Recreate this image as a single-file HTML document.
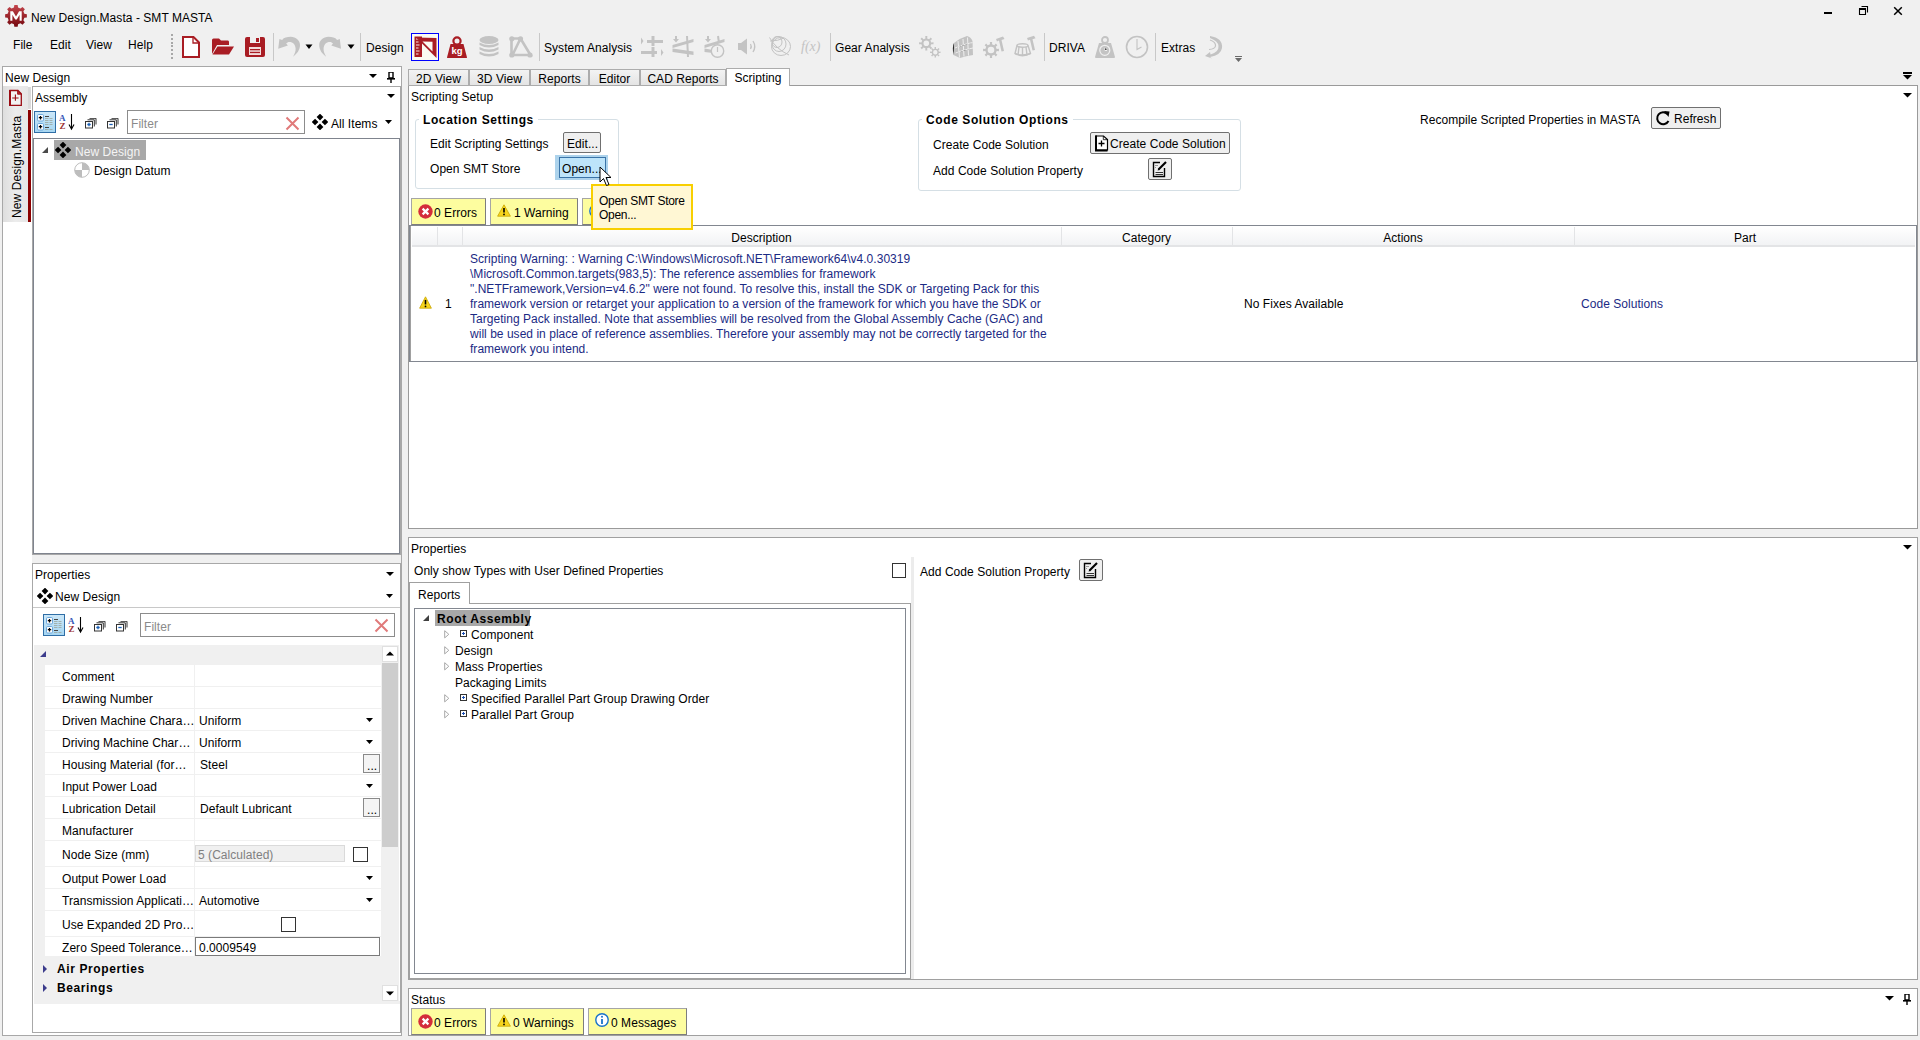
<!DOCTYPE html><html><head><meta charset="utf-8"><style>
html,body{margin:0;padding:0;width:1920px;height:1040px;overflow:hidden;background:#f0f0f0;}
body{position:relative;font-family:"Liberation Sans",sans-serif;font-size:12px;}
div,span,svg{position:absolute;}
.t{white-space:pre;line-height:14px;letter-spacing:0.05px;}
</style></head><body>
<svg style="left:4px;top:4px;" width="24" height="24" viewBox="0 0 24 24"><defs><linearGradient id="gg" x1="0" y1="0" x2="0" y2="1"><stop offset="0" stop-color="#c4454c"/><stop offset="1" stop-color="#75080e"/></linearGradient></defs><path d="M9.93 3.45 L10.35 0.93 L13.65 0.93 L14.07 3.45 L16.44 4.43 L18.52 2.94 L20.86 5.28 L19.37 7.36 L20.35 9.73 L22.87 10.15 L22.87 13.45 L20.35 13.87 L19.37 16.24 L20.86 18.32 L18.52 20.66 L16.44 19.17 L14.07 20.15 L13.65 22.67 L10.35 22.67 L9.93 20.15 L7.56 19.17 L5.48 20.66 L3.14 18.32 L4.63 16.24 L3.65 13.87 L1.13 13.45 L1.13 10.15 L3.65 9.73 L4.63 7.36 L3.14 5.28 L5.48 2.94 L7.56 4.43 Z" fill="url(#gg)"/><path d="M6.3 16.8 V7.2 H8.9 L12 12.6 L15.1 7.2 H17.7 V16.8 H15.6 V10.8 L12.8 15.6 H11.2 L8.4 10.8 V16.8 Z" fill="#fff"/></svg>
<span class="t" style="left:31px;top:11px;font-size:12px;color:#000;">New Design.Masta - SMT MASTA</span>
<div style="left:1824px;top:12px;width:8px;height:2px;background:#000;"></div>
<svg style="left:1857px;top:4px;" width="14" height="14" viewBox="0 0 14 14"><path d="M2.5 5 H8.5 V10.5 H2.5 Z" fill="none" stroke="#000" stroke-width="1.1"/><rect x="2" y="4" width="7" height="2" fill="#000"/><path d="M4.5 2.5 H10.5 V8.5" fill="none" stroke="#000" stroke-width="1.1"/></svg>
<svg style="left:1891px;top:4px;" width="14" height="14" viewBox="0 0 14 14"><path d="M3.2 3.2 L10.8 10.8 M10.8 3.2 L3.2 10.8" stroke="#000" stroke-width="1.5"/></svg>
<span class="t" style="left:13px;top:38px;font-size:12px;color:#000;">File</span>
<span class="t" style="left:50px;top:38px;font-size:12px;color:#000;">Edit</span>
<span class="t" style="left:86px;top:38px;font-size:12px;color:#000;">View</span>
<span class="t" style="left:128px;top:38px;font-size:12px;color:#000;">Help</span>
<span class="t" style="left:366px;top:41px;font-size:12px;color:#000;">Design</span>
<span class="t" style="left:544px;top:41px;font-size:12px;color:#000;">System Analysis</span>
<span class="t" style="left:835px;top:41px;font-size:12px;color:#000;">Gear Analysis</span>
<span class="t" style="left:1049px;top:41px;font-size:12px;color:#000;">DRIVA</span>
<span class="t" style="left:1161px;top:41px;font-size:12px;color:#000;">Extras</span>
<div style="left:2px;top:66px;width:400px;height:970px;background:#fff;border:1px solid #a8a8a8;box-sizing:border-box;"></div>
<span class="t" style="left:5px;top:71px;font-size:12px;color:#000;">New Design</span>
<div style="left:32px;top:86px;width:369px;height:1px;background:#b8b8b8;"></div>
<div style="left:3px;top:86px;width:25px;height:136px;background:linear-gradient(to right,#dedede,#ececec 50%,#e6e6e6);"></div>
<div style="left:28px;top:87px;width:3px;height:22px;background:#dadada;"></div>
<div style="left:28px;top:110px;width:3px;height:112px;background:#8b0000;"></div>
<div style="left:32px;top:86px;width:369px;height:469px;background:#fff;border:1px solid #a8a8a8;box-sizing:border-box;"></div>
<span class="t" style="left:35px;top:91px;font-size:12px;color:#000;">Assembly</span>
<div style="left:33px;top:138px;width:367px;height:416px;background:#fff;border:1px solid #7f848e;box-sizing:border-box;"></div>
<div style="left:32px;top:555px;width:369px;height:8px;background:#f0f0f0;"></div>
<div style="left:32px;top:563px;width:369px;height:470px;background:#fff;border:1px solid #a8a8a8;box-sizing:border-box;"></div>
<span class="t" style="left:35px;top:568px;font-size:12px;color:#000;">Properties</span>
<span class="t" style="left:55px;top:590px;font-size:12px;color:#000;">New Design</span>
<div style="left:33px;top:607px;width:367px;height:1px;background:#c8c8c8;"></div>
<div style="left:408px;top:85px;width:1510px;height:444px;background:#fff;border:1px solid #9a9a9a;box-sizing:border-box;"></div>
<div style="left:408px;top:537px;width:1510px;height:443px;background:#fff;border:1px solid #a0a0a0;box-sizing:border-box;"></div>
<div style="left:408px;top:988px;width:1510px;height:48px;background:#fff;border:1px solid #a0a0a0;box-sizing:border-box;"></div>
<div style="left:171px;top:34.0px;width:2px;height:2.0px;background:#a8a8a8;"></div>
<div style="left:171px;top:37.8px;width:2px;height:2.0px;background:#a8a8a8;"></div>
<div style="left:171px;top:41.6px;width:2px;height:2.0px;background:#a8a8a8;"></div>
<div style="left:171px;top:45.4px;width:2px;height:2.0px;background:#a8a8a8;"></div>
<div style="left:171px;top:49.2px;width:2px;height:2.0px;background:#a8a8a8;"></div>
<div style="left:171px;top:53.0px;width:2px;height:2.0px;background:#a8a8a8;"></div>
<div style="left:171px;top:56.8px;width:2px;height:2.0px;background:#a8a8a8;"></div>
<div style="left:273px;top:33px;width:1px;height:28px;background:#c8c8c8;"></div>
<div style="left:360px;top:33px;width:1px;height:28px;background:#c8c8c8;"></div>
<div style="left:539px;top:33px;width:1px;height:28px;background:#c8c8c8;"></div>
<div style="left:830px;top:33px;width:1px;height:28px;background:#c8c8c8;"></div>
<div style="left:1044px;top:33px;width:1px;height:28px;background:#c8c8c8;"></div>
<div style="left:1155px;top:33px;width:1px;height:28px;background:#c8c8c8;"></div>
<svg style="left:181px;top:35px;" width="20" height="24" viewBox="0 0 20 24"><path d="M2 2 H12.5 L18 7.5 V22 H2 Z" fill="#fff" stroke="#a91d24" stroke-width="2"/><path d="M12 2.5 V8 H17.5" fill="none" stroke="#a91d24" stroke-width="1.3"/></svg>
<svg style="left:211px;top:37px;" width="24" height="20" viewBox="0 0 24 20"><path d="M1 3 Q1 1.5 2.5 1.5 H8 L10 3.5 H17 Q18 3.5 18 5 V8 H6 L1 17 Z" fill="#a91d24"/><path d="M6.5 9.5 H23 L18 17.5 H1.5 Z" fill="#a91d24"/></svg>
<svg style="left:244px;top:36px;" width="22" height="22" viewBox="0 0 22 22"><path d="M1 3 Q1 1 3 1 H19 Q21 1 21 3 V19 Q21 21 19 21 H3 Q1 21 1 19 Z" fill="#a91d24"/><rect x="6" y="1" width="10" height="6" fill="#f0f0f0"/><rect x="12" y="2" width="3" height="4" fill="#a91d24"/><rect x="5" y="11" width="12" height="8" fill="#f3dcdc"/><rect x="6" y="13" width="10" height="1.3" fill="#a91d24"/><rect x="6" y="15.8" width="10" height="1.3" fill="#a91d24"/></svg>
<svg style="left:274px;top:33px;" width="30" height="28" viewBox="0 0 30 28"><path d="M5.4 5.9 L8.1 6.9 C10 4.5 13 3.8 16.7 3.8 C22 3.8 26 7.5 26 12.1 C26 17 23 21 19.1 23.7 C21 20 21.8 18 21.6 15.5 C21.4 11.5 19 8.9 15.4 8.9 C14 8.9 13 9.5 12.2 10.5 L13.9 12.4 L4.2 15.8 Z" fill="#c3c3c3"/></svg>
<svg style="left:316px;top:33px;" width="30" height="28" viewBox="0 0 30 28"><path transform="translate(29.2,0) scale(-1,1)" d="M5.4 5.9 L8.1 6.9 C10 4.5 13 3.8 16.7 3.8 C22 3.8 26 7.5 26 12.1 C26 17 23 21 19.1 23.7 C21 20 21.8 18 21.6 15.5 C21.4 11.5 19 8.9 15.4 8.9 C14 8.9 13 9.5 12.2 10.5 L13.9 12.4 L4.2 15.8 Z" fill="#c3c3c3"/></svg>
<svg style="left:305px;top:44px;" width="9" height="6" viewBox="0 0 9 6"><path d="M0.5 0.5 H7.5 L4 5 Z" fill="#000"/></svg>
<svg style="left:347px;top:44px;" width="9" height="6" viewBox="0 0 9 6"><path d="M0.5 0.5 H7.5 L4 5 Z" fill="#000"/></svg>
<div style="left:411px;top:33px;width:28px;height:28px;background:#fbfbf2;border:1px solid #0000ff;box-sizing:border-box;"></div>
<svg style="left:413px;top:35px;" width="26" height="25" viewBox="0 0 26 25"><path d="M1.5 1.5 H9 V22 H1.5 Z" fill="#a91d24"/><path d="M3 4 H6.5 M3 7 H5.5 M3 10 H6.5 M3 13 H5.5 M3 16 H6.5 M3 19 H5.5" stroke="#f8e8e8" stroke-width="1"/><path d="M3 2.5 L23.5 3 V23 Z" fill="#a91d24"/><path d="M9.5 6.5 L19.5 6.8 V16.5 Z" fill="#fbfbf2"/></svg>
<svg style="left:446px;top:36px;" width="22" height="23" viewBox="0 0 22 23"><circle cx="11" cy="5" r="3.6" fill="none" stroke="#a91d24" stroke-width="2.2"/><path d="M4.5 8 H17.5 L21 21.5 Q21 22 20 22 H2 Q1 22 1 21.5 Z" fill="#a91d24"/><text x="11" y="18" font-family="Liberation Sans" font-weight="bold" font-size="9.5" fill="#fff" text-anchor="middle">kg</text></svg>
<svg style="left:478px;top:35px;" width="22" height="24" viewBox="0 0 22 24"><ellipse cx="11" cy="5" rx="9.5" ry="4" fill="#c3c3c3"/><path d="M1.5 7.5 Q11 12.5 20.5 7.5 V10 Q11 15 1.5 10 Z M1.5 12 Q11 17 20.5 12 V14.5 Q11 19.5 1.5 14.5 Z M1.5 16.5 Q11 21.5 20.5 16.5 V19 Q11 24 1.5 19 Z" fill="#c3c3c3"/></svg>
<svg style="left:509px;top:36px;" width="24" height="22" viewBox="0 0 24 22"><path d="M2.5 2.5 H11.5 M2.5 2.5 V19 M11.5 2.5 L21.5 19 H2.5 M11.5 2.5 L3.5 19" stroke="#c3c3c3" stroke-width="2.6" fill="none"/><circle cx="2.8" cy="2.8" r="2.6" fill="#c3c3c3"/><circle cx="11.5" cy="2.8" r="2.6" fill="#c3c3c3"/><circle cx="2.8" cy="19" r="2.6" fill="#c3c3c3"/><circle cx="21" cy="19" r="2.6" fill="#c3c3c3"/></svg>
<svg style="left:640px;top:35px;" width="24" height="23" viewBox="0 0 24 23"><path d="M1 2.5 L3.5 6 L1 9.5 Z M21 14 L23.5 17.5 L21 21 Z" fill="#c3c3c3"/><rect x="7" y="5" width="16" height="3" fill="#c3c3c3"/><rect x="11.5" y="1" width="3" height="10" fill="#c3c3c3"/><rect x="1" y="16" width="16" height="3" fill="#c3c3c3"/><rect x="11.5" y="12" width="3" height="10" fill="#c3c3c3"/></svg>
<svg style="left:672px;top:35px;" width="24" height="23" viewBox="0 0 24 23"><path d="M3 1 H5 V4 H7 L4 7.5 L1 4 H3 Z" fill="#c3c3c3"/><path d="M0.5 10 L21.5 4 V7 L0.5 13 Z M0.5 13.5 L21.5 16.5 V20 L0.5 17 Z" fill="#c3c3c3"/><path d="M15 1 L16 22" stroke="#c3c3c3" stroke-width="2"/></svg>
<svg style="left:704px;top:35px;" width="24" height="24" viewBox="0 0 24 24"><path d="M3 1 H5 V4 H7 L4 7.5 L1 4 H3 Z" fill="#c3c3c3"/><path d="M0.5 10 L20.5 4 V7 L0.5 13 Z M0.5 13.5 L9 15 V18 L0.5 17 Z" fill="#c3c3c3"/><path d="M14 1 L15 8" stroke="#c3c3c3" stroke-width="2"/><circle cx="13.5" cy="16" r="6.2" fill="#f0f0f0" stroke="#c3c3c3" stroke-width="1.4"/><path d="M13.5 12 V17" stroke="#c3c3c3" stroke-width="1.2"/></svg>
<svg style="left:737px;top:37px;" width="22" height="19" viewBox="0 0 22 19"><path d="M1 6 H4 L10 1.5 V17.5 L4 13 H1 Z" fill="#c3c3c3"/><path d="M13.5 7 Q15 9.5 13.5 12 M16 4 Q19.5 9.5 16 15" stroke="#c3c3c3" stroke-width="1.3" fill="none"/></svg>
<svg style="left:768px;top:35px;" width="24" height="22" viewBox="0 0 24 22"><g fill="none" stroke="#c3c3c3" stroke-width="1"><ellipse cx="13" cy="11.5" rx="9.5" ry="9"/><ellipse cx="11" cy="9" rx="7" ry="7.5"/><ellipse cx="9" cy="7" rx="5" ry="5.5"/><path d="M1.5 2.5 Q8 14 21 20"/><path d="M2 6 Q10 6 16 3"/></g></svg>
<svg style="left:800px;top:38px;" width="24" height="16" viewBox="0 0 24 16"><text x="1" y="13" font-family="Liberation Serif" font-style="italic" font-size="14" fill="#c3c3c3">f(x)</text></svg>
<svg style="left:917px;top:34px;" width="26" height="26" viewBox="0 0 26 26"><path d="M14.22 8.42 L16.53 8.27 L16.53 10.33 L14.22 10.18 L13.40 12.16 L15.14 13.68 L13.68 15.14 L12.16 13.40 L10.18 14.22 L10.33 16.53 L8.27 16.53 L8.42 14.22 L6.44 13.40 L4.92 15.14 L3.46 13.68 L5.20 12.16 L4.38 10.18 L2.07 10.33 L2.07 8.27 L4.38 8.42 L5.20 6.44 L3.46 4.92 L4.92 3.46 L6.44 5.20 L8.42 4.38 L8.27 2.07 L10.33 2.07 L10.18 4.38 L12.16 5.20 L13.68 3.46 L15.14 4.92 L13.40 6.44 Z M12.10 9.30 A2.8 2.8 0 1 0 6.50 9.30 A2.8 2.8 0 1 0 12.10 9.30 Z" fill="#c3c3c3" fill-rule="evenodd"/><path d="M21.94 17.65 L23.55 17.55 L23.55 19.05 L21.94 18.95 L21.34 20.42 L22.54 21.48 L21.48 22.54 L20.42 21.34 L18.95 21.94 L19.05 23.55 L17.55 23.55 L17.65 21.94 L16.18 21.34 L15.12 22.54 L14.06 21.48 L15.26 20.42 L14.66 18.95 L13.05 19.05 L13.05 17.55 L14.66 17.65 L15.26 16.18 L14.06 15.12 L15.12 14.06 L16.18 15.26 L17.65 14.66 L17.55 13.05 L19.05 13.05 L18.95 14.66 L20.42 15.26 L21.48 14.06 L22.54 15.12 L21.34 16.18 Z M20.50 18.30 A2.2 2.2 0 1 0 16.10 18.30 A2.2 2.2 0 1 0 20.50 18.30 Z" fill="#c3c3c3" fill-rule="evenodd"/></svg>
<svg style="left:950px;top:35px;" width="24" height="24" viewBox="0 0 24 24"><path d="M4 8 Q10 3 17 1 Q21 2 22.5 6 L23 20 Q16 21 10 23 L3.5 20 Z" fill="#c3c3c3"/><g stroke="#f0f0f0" stroke-width="1"><path d="M8 6 L9.5 22.5 M13 4 L14 21.5 M17.5 2.5 L18.5 20.5"/><path d="M5 13 Q14 9 22.5 7.5 M5.5 18 Q14 14.5 23 13"/></g><path d="M4 8 Q2 12 3.5 20" stroke="#f0f0f0" stroke-width="0"/></svg>
<svg style="left:982px;top:35px;" width="24" height="24" viewBox="0 0 24 24"><path d="M14.71 13.98 L16.92 13.87 L16.92 16.13 L14.71 16.02 L13.76 18.32 L15.40 19.80 L13.80 21.40 L12.32 19.76 L10.02 20.71 L10.13 22.92 L7.87 22.92 L7.98 20.71 L5.68 19.76 L4.20 21.40 L2.60 19.80 L4.24 18.32 L3.29 16.02 L1.08 16.13 L1.08 13.87 L3.29 13.98 L4.24 11.68 L2.60 10.20 L4.20 8.60 L5.68 10.24 L7.98 9.29 L7.87 7.08 L10.13 7.08 L10.02 9.29 L12.32 10.24 L13.80 8.60 L15.40 10.20 L13.76 11.68 Z M12.30 15.00 A3.3 3.3 0 1 0 5.70 15.00 A3.3 3.3 0 1 0 12.30 15.00 Z" fill="#c3c3c3" fill-rule="evenodd"/><path d="M14 4 L21 1.5 L22.5 4 L19.5 5 L22 16 L19.5 16.5 L17 5.5 L15 6.5 Z" fill="#c3c3c3"/></svg>
<svg style="left:1014px;top:35px;" width="24" height="24" viewBox="0 0 24 24"><g fill="none" stroke="#c3c3c3" stroke-width="1.4"><ellipse cx="8.5" cy="10.5" rx="5.5" ry="1.8"/><path d="M3 10.5 L1 18.5 Q8.5 23 16.5 18.5 L14 10.5"/><path d="M1 18.5 Q8.5 21.5 16.5 18.5"/><path d="M5 12 L4 20 M8.5 12.5 L8.5 21 M12 12 L13 20"/></g><path d="M13 3 L20 0.8 L21.5 3.2 L18.5 4.2 L21 15 L18.5 15.5 L16 4.8 L14 5.5 Z" fill="#c3c3c3"/></svg>
<svg style="left:1094px;top:35px;" width="22" height="24" viewBox="0 0 22 24"><circle cx="11" cy="5" r="3" fill="none" stroke="#c3c3c3" stroke-width="1.8"/><path d="M5 8 H17 L21 22 Q21 23 20 23 H2 Q1 23 1 22 Z" fill="#c3c3c3"/><circle cx="10.8" cy="15.3" r="5" fill="none" stroke="#f0f0f0" stroke-width="1.2"/><path d="M10.8 12.5 V15.5 H13" stroke="#f0f0f0" stroke-width="1"/></svg>
<svg style="left:1125px;top:35px;" width="24" height="24" viewBox="0 0 24 24"><circle cx="12" cy="12" r="10.5" fill="none" stroke="#c3c3c3" stroke-width="1.6"/><path d="M12 4 V14.5 L16.5 12" fill="none" stroke="#c3c3c3" stroke-width="1.1"/></svg>
<svg style="left:1204px;top:35px;" width="20" height="24" viewBox="0 0 20 24"><path d="M6 1 Q19 3 18 13 Q17 20 6 22 L8 23.5 L1 21 L6 17 L6.5 19.5 Q15 17 14.5 11 Q14 6 6 3 Z" fill="#c3c3c3"/><path d="M6 5 Q12 7 11.5 11 Q11 14 5 14.5" stroke="#c3c3c3" stroke-width="1.2" fill="none"/></svg>
<div style="left:1235px;top:56px;width:7px;height:1px;background:#6a6a6a;"></div>
<svg style="left:1234px;top:58px;" width="9" height="5" viewBox="0 0 9 5"><path d="M1 0 H8 L4.5 4 Z" fill="#6a6a6a"/></svg>
<svg style="left:369px;top:74px;" width="9" height="5" viewBox="0 0 9 5"><path d="M0 0 H8 L4.0 4 Z" fill="#000"/></svg>
<svg style="left:387px;top:72px;" width="9" height="11" viewBox="0 0 9 11"><path d="M2 0 H6 V6 H2 Z" fill="none" stroke="#000" stroke-width="1.4"/><rect x="0" y="6" width="8" height="1.6" fill="#000"/><rect x="3.3" y="7" width="1.4" height="4" fill="#000"/></svg>
<svg style="left:387px;top:94px;" width="9" height="5" viewBox="0 0 9 5"><path d="M0 0 H8 L4.0 4 Z" fill="#000"/></svg>
<svg style="left:8px;top:89px;" width="16" height="18" viewBox="0 0 16 18"><path d="M2 1.5 H10 L13.3 4.8 V16.3 H2 Z" fill="#f2f2f2" stroke="#9b0d14" stroke-width="1.3"/><rect x="1" y="1" width="2" height="16" fill="#9b0d14"/><path d="M9.6 1.5 V5.2 H13.3 Z" fill="#b82a31" stroke="#9b0d14" stroke-width="0.9"/><path d="M7.4 5.5 V11.8 M4.2 9 H10.6" stroke="#9b0d14" stroke-width="1.1"/></svg>
<span class="t" style="left:10px;top:218px;transform-origin:0 0;transform:rotate(-90deg);font-size:12px;letter-spacing:0.1px;">New Design.Masta</span>
<div style="left:34px;top:111px;width:22px;height:22px;background:linear-gradient(#cbe7f8,#a6d6f2);border:1px solid #2f6ea6;box-sizing:border-box;"></div>
<svg style="left:34px;top:111px;" width="22" height="22" viewBox="0 0 22 22"><g><rect x="3.5" y="3.5" width="6" height="6.5" rx="1.2" fill="#fff" stroke="#6aa6dc" stroke-width="1"/><path d="M4.8 6.7 H8.2 M6.5 5 V8.4" stroke="#000" stroke-width="1.3"/><rect x="3.5" y="12.5" width="6" height="6.5" rx="1.2" fill="#fff" stroke="#6aa6dc" stroke-width="1"/><path d="M4.8 15.7 H8.2 M6.5 14 V17.4" stroke="#000" stroke-width="1.3"/><path d="M11 5.5 H15" stroke="#444" stroke-width="1"/><path d="M11 7.5 H14.5 M15.5 7.5 H18.5 M11 9.5 H14.5 M15.5 9.5 H18.5 M11 11.5 H14.5 M15.5 11.5 H18.5 M11 13.5 H14.5 M15.5 13.5 H18.5 M11 18.5 H14.5 M15.5 18.5 H18.5" stroke="#9aa49c" stroke-width="0.8"/><path d="M11 16.5 H15" stroke="#444" stroke-width="1"/></g></svg>
<svg style="left:59px;top:112px;" width="17" height="20" viewBox="0 0 17 20"><text x="0" y="8.7" font-family="Liberation Serif" font-weight="bold" font-size="9" fill="#3457b8">A</text><text x="0.6" y="16.8" font-family="Liberation Serif" font-weight="bold" font-size="9" fill="#9b3232">Z</text><path d="M12.5 2 V16" stroke="#000" stroke-width="1.1"/><path d="M10 12.5 L12.5 17 L15 12.5" fill="none" stroke="#000" stroke-width="1.1"/></svg>
<svg style="left:85px;top:118px;" width="12" height="12" viewBox="0 0 12 12"><g fill="none" stroke="#333" stroke-width="1"><rect x="0.5" y="3.5" width="7" height="6.5" fill="#fff"/><path d="M2.5 1.8 H9.3 V8.5 M4.5 0.3 H11 V6.5"/></g><path d="M2.3 6.5 H5.7 M4 4.8 V8.2" stroke="#1a5fb4" stroke-width="1.3"/></svg>
<svg style="left:107px;top:118px;" width="12" height="12" viewBox="0 0 12 12"><g fill="none" stroke="#333" stroke-width="1"><rect x="0.5" y="3.5" width="7" height="6.5" fill="#fff"/><path d="M2.5 1.8 H9.3 V8.5 M4.5 0.3 H11 V6.5"/></g><path d="M2.3 6.5 H5.7" stroke="#1a5fb4" stroke-width="1.3"/></svg>
<div style="left:127px;top:110px;width:178px;height:24px;background:#fff;border:1px solid #8c8c8c;box-sizing:border-box;"></div>
<span class="t" style="left:131px;top:117px;font-size:12px;color:#8a8a8a;">Filter</span>
<svg style="left:285px;top:116px;" width="15" height="15" viewBox="0 0 15 15"><path d="M1.5 1.5 L13.5 13.5 M13.5 1.5 L1.5 13.5" stroke="#e07a7a" stroke-width="2"/></svg>
<svg style="left:312px;top:114px;" width="16" height="16" viewBox="0 0 16 16"><g fill="#000"><path d="M8.0 -0.31999999999999984 L11.36 3.04 L8.0 6.4 L4.640000000000001 3.04 Z"/><path d="M8.0 9.600000000000001 L11.36 12.96 L8.0 16.32 L4.640000000000001 12.96 Z"/><path d="M3.04 4.640000000000001 L6.4 8.0 L3.04 11.36 L-0.31999999999999984 8.0 Z"/><path d="M12.96 4.640000000000001 L16.32 8.0 L12.96 11.36 L9.600000000000001 8.0 Z"/></g></svg>
<span class="t" style="left:331px;top:117px;font-size:12px;color:#000;">All Items</span>
<svg style="left:385px;top:120px;" width="8" height="5" viewBox="0 0 8 5"><path d="M0 0 H7 L3.5 4 Z" fill="#000"/></svg>
<div style="left:54px;top:140px;width:92px;height:20px;background:#a8a8a8;"></div>
<svg style="left:42px;top:147px;" width="7" height="7" viewBox="0 0 7 7"><path d="M6 0 V6 H0 Z" fill="#4a4a4a"/></svg>
<svg style="left:55px;top:142px;" width="16" height="16" viewBox="0 0 16 16"><g fill="#000"><path d="M8.0 -0.31999999999999984 L11.36 3.04 L8.0 6.4 L4.640000000000001 3.04 Z"/><path d="M8.0 9.600000000000001 L11.36 12.96 L8.0 16.32 L4.640000000000001 12.96 Z"/><path d="M3.04 4.640000000000001 L6.4 8.0 L3.04 11.36 L-0.31999999999999984 8.0 Z"/><path d="M12.96 4.640000000000001 L16.32 8.0 L12.96 11.36 L9.600000000000001 8.0 Z"/></g></svg>
<span class="t" style="left:75px;top:145px;font-size:12px;color:#f4f4f4;">New Design</span>
<svg style="left:74px;top:162px;" width="16" height="16" viewBox="0 0 16 16"><circle cx="8" cy="8" r="7.3" fill="#fff" stroke="#bdbdbd" stroke-width="1"/><path d="M8 0.7 A7.3 7.3 0 0 1 15.3 8 H8 Z M8 15.3 A7.3 7.3 0 0 1 0.7 8 H8 Z" fill="#bdbdbd"/></svg>
<span class="t" style="left:94px;top:164px;font-size:12px;color:#000;">Design Datum</span>
<svg style="left:386px;top:572px;" width="9" height="5" viewBox="0 0 9 5"><path d="M0 0 H8 L4.0 4 Z" fill="#000"/></svg>
<svg style="left:37px;top:588px;" width="16" height="16" viewBox="0 0 16 16"><g fill="#000"><path d="M8.0 -0.31999999999999984 L11.36 3.04 L8.0 6.4 L4.640000000000001 3.04 Z"/><path d="M8.0 9.600000000000001 L11.36 12.96 L8.0 16.32 L4.640000000000001 12.96 Z"/><path d="M3.04 4.640000000000001 L6.4 8.0 L3.04 11.36 L-0.31999999999999984 8.0 Z"/><path d="M12.96 4.640000000000001 L16.32 8.0 L12.96 11.36 L9.600000000000001 8.0 Z"/></g></svg>
<svg style="left:386px;top:594px;" width="8" height="5" viewBox="0 0 8 5"><path d="M0 0 H7 L3.5 4 Z" fill="#000"/></svg>
<div style="left:43px;top:614px;width:22px;height:22px;background:linear-gradient(#cbe7f8,#a6d6f2);border:1px solid #2f6ea6;box-sizing:border-box;"></div>
<svg style="left:43px;top:614px;" width="22" height="22" viewBox="0 0 22 22"><g><rect x="3.5" y="3.5" width="6" height="6.5" rx="1.2" fill="#fff" stroke="#6aa6dc" stroke-width="1"/><path d="M4.8 6.7 H8.2 M6.5 5 V8.4" stroke="#000" stroke-width="1.3"/><rect x="3.5" y="12.5" width="6" height="6.5" rx="1.2" fill="#fff" stroke="#6aa6dc" stroke-width="1"/><path d="M4.8 15.7 H8.2 M6.5 14 V17.4" stroke="#000" stroke-width="1.3"/><path d="M11 5.5 H15" stroke="#444" stroke-width="1"/><path d="M11 7.5 H14.5 M15.5 7.5 H18.5 M11 9.5 H14.5 M15.5 9.5 H18.5 M11 11.5 H14.5 M15.5 11.5 H18.5 M11 13.5 H14.5 M15.5 13.5 H18.5 M11 18.5 H14.5 M15.5 18.5 H18.5" stroke="#9aa49c" stroke-width="0.8"/><path d="M11 16.5 H15" stroke="#444" stroke-width="1"/></g></svg>
<svg style="left:68px;top:615px;" width="17" height="20" viewBox="0 0 17 20"><text x="0" y="8.7" font-family="Liberation Serif" font-weight="bold" font-size="9" fill="#3457b8">A</text><text x="0.6" y="16.8" font-family="Liberation Serif" font-weight="bold" font-size="9" fill="#9b3232">Z</text><path d="M12.5 2 V16" stroke="#000" stroke-width="1.1"/><path d="M10 12.5 L12.5 17 L15 12.5" fill="none" stroke="#000" stroke-width="1.1"/></svg>
<svg style="left:94px;top:621px;" width="12" height="12" viewBox="0 0 12 12"><g fill="none" stroke="#333" stroke-width="1"><rect x="0.5" y="3.5" width="7" height="6.5" fill="#fff"/><path d="M2.5 1.8 H9.3 V8.5 M4.5 0.3 H11 V6.5"/></g><path d="M2.3 6.5 H5.7 M4 4.8 V8.2" stroke="#1a5fb4" stroke-width="1.3"/></svg>
<svg style="left:116px;top:621px;" width="12" height="12" viewBox="0 0 12 12"><g fill="none" stroke="#333" stroke-width="1"><rect x="0.5" y="3.5" width="7" height="6.5" fill="#fff"/><path d="M2.5 1.8 H9.3 V8.5 M4.5 0.3 H11 V6.5"/></g><path d="M2.3 6.5 H5.7" stroke="#1a5fb4" stroke-width="1.3"/></svg>
<div style="left:140px;top:613px;width:255px;height:24px;background:#fff;border:1px solid #8c8c8c;box-sizing:border-box;"></div>
<span class="t" style="left:144px;top:620px;font-size:12px;color:#8a8a8a;">Filter</span>
<svg style="left:374px;top:618px;" width="15" height="15" viewBox="0 0 15 15"><path d="M1.5 1.5 L13.5 13.5 M13.5 1.5 L1.5 13.5" stroke="#e07a7a" stroke-width="2"/></svg>
<div style="left:34px;top:645px;width:347px;height:356px;background:#f0f0f0;"></div>
<svg style="left:40px;top:651px;" width="7" height="7" viewBox="0 0 7 7"><path d="M6 0 V6 H0 Z" fill="#3c3c8c"/></svg>
<div style="left:45px;top:665px;width:336px;height:22px;background:#fff;"></div>
<div style="left:45px;top:686px;width:336px;height:1px;background:#f0f0f0;"></div>
<div style="left:194px;top:665px;width:1px;height:22px;background:#f0f0f0;"></div>
<span class="t" style="left:62px;top:670px;font-size:12px;color:#000;">Comment</span>
<div style="left:45px;top:687px;width:336px;height:22px;background:#fff;"></div>
<div style="left:45px;top:708px;width:336px;height:1px;background:#f0f0f0;"></div>
<div style="left:194px;top:687px;width:1px;height:22px;background:#f0f0f0;"></div>
<span class="t" style="left:62px;top:692px;font-size:12px;color:#000;">Drawing Number</span>
<div style="left:45px;top:709px;width:336px;height:22px;background:#fff;"></div>
<div style="left:45px;top:730px;width:336px;height:1px;background:#f0f0f0;"></div>
<div style="left:194px;top:709px;width:1px;height:22px;background:#f0f0f0;"></div>
<span class="t" style="left:62px;top:714px;font-size:12px;color:#000;">Driven Machine Chara…</span>
<span class="t" style="left:199px;top:714px;font-size:12px;color:#000;">Uniform</span>
<svg style="left:366px;top:718px;" width="8" height="5" viewBox="0 0 8 5"><path d="M0 0 H7 L3.5 4 Z" fill="#000"/></svg>
<div style="left:45px;top:731px;width:336px;height:22px;background:#fff;"></div>
<div style="left:45px;top:752px;width:336px;height:1px;background:#f0f0f0;"></div>
<div style="left:194px;top:731px;width:1px;height:22px;background:#f0f0f0;"></div>
<span class="t" style="left:62px;top:736px;font-size:12px;color:#000;">Driving Machine Char…</span>
<span class="t" style="left:199px;top:736px;font-size:12px;color:#000;">Uniform</span>
<svg style="left:366px;top:740px;" width="8" height="5" viewBox="0 0 8 5"><path d="M0 0 H7 L3.5 4 Z" fill="#000"/></svg>
<div style="left:45px;top:753px;width:336px;height:22px;background:#fff;"></div>
<div style="left:45px;top:774px;width:336px;height:1px;background:#f0f0f0;"></div>
<div style="left:194px;top:753px;width:1px;height:22px;background:#f0f0f0;"></div>
<span class="t" style="left:62px;top:758px;font-size:12px;color:#000;">Housing Material (for…</span>
<span class="t" style="left:200px;top:758px;font-size:12px;color:#000;">Steel</span>
<div style="left:363px;top:754px;width:17px;height:19px;background:#f4f4f4;border:1px solid #8a8a8a;box-sizing:border-box;"></div>
<span class="t" style="left:367px;top:759px;font-size:12px;color:#000;">...</span>
<div style="left:45px;top:775px;width:336px;height:22px;background:#fff;"></div>
<div style="left:45px;top:796px;width:336px;height:1px;background:#f0f0f0;"></div>
<div style="left:194px;top:775px;width:1px;height:22px;background:#f0f0f0;"></div>
<span class="t" style="left:62px;top:780px;font-size:12px;color:#000;">Input Power Load</span>
<span class="t" style="left:199px;top:780px;font-size:12px;color:#000;"></span>
<svg style="left:366px;top:784px;" width="8" height="5" viewBox="0 0 8 5"><path d="M0 0 H7 L3.5 4 Z" fill="#000"/></svg>
<div style="left:45px;top:797px;width:336px;height:22px;background:#fff;"></div>
<div style="left:45px;top:818px;width:336px;height:1px;background:#f0f0f0;"></div>
<div style="left:194px;top:797px;width:1px;height:22px;background:#f0f0f0;"></div>
<span class="t" style="left:62px;top:802px;font-size:12px;color:#000;">Lubrication Detail</span>
<span class="t" style="left:200px;top:802px;font-size:12px;color:#000;">Default Lubricant</span>
<div style="left:363px;top:798px;width:17px;height:19px;background:#f4f4f4;border:1px solid #8a8a8a;box-sizing:border-box;"></div>
<span class="t" style="left:367px;top:803px;font-size:12px;color:#000;">...</span>
<div style="left:45px;top:819px;width:336px;height:22px;background:#fff;"></div>
<div style="left:45px;top:840px;width:336px;height:1px;background:#f0f0f0;"></div>
<div style="left:194px;top:819px;width:1px;height:22px;background:#f0f0f0;"></div>
<span class="t" style="left:62px;top:824px;font-size:12px;color:#000;">Manufacturer</span>
<div style="left:45px;top:841px;width:336px;height:26px;background:#fff;"></div>
<div style="left:45px;top:866px;width:336px;height:1px;background:#f0f0f0;"></div>
<div style="left:194px;top:841px;width:1px;height:26px;background:#f0f0f0;"></div>
<span class="t" style="left:62px;top:848px;font-size:12px;color:#000;">Node Size (mm)</span>
<div style="left:195px;top:845px;width:150px;height:17px;background:#f0f0f0;border:1px solid #dadada;box-sizing:border-box;"></div>
<span class="t" style="left:198px;top:848px;font-size:12px;color:#808080;">5 (Calculated)</span>
<div style="left:353px;top:847px;width:15px;height:15px;background:#fff;border:1px solid #333;box-sizing:border-box;"></div>
<div style="left:45px;top:867px;width:336px;height:22px;background:#fff;"></div>
<div style="left:45px;top:888px;width:336px;height:1px;background:#f0f0f0;"></div>
<div style="left:194px;top:867px;width:1px;height:22px;background:#f0f0f0;"></div>
<span class="t" style="left:62px;top:872px;font-size:12px;color:#000;">Output Power Load</span>
<span class="t" style="left:199px;top:872px;font-size:12px;color:#000;"></span>
<svg style="left:366px;top:876px;" width="8" height="5" viewBox="0 0 8 5"><path d="M0 0 H7 L3.5 4 Z" fill="#000"/></svg>
<div style="left:45px;top:889px;width:336px;height:22px;background:#fff;"></div>
<div style="left:45px;top:910px;width:336px;height:1px;background:#f0f0f0;"></div>
<div style="left:194px;top:889px;width:1px;height:22px;background:#f0f0f0;"></div>
<span class="t" style="left:62px;top:894px;font-size:12px;color:#000;">Transmission Applicati…</span>
<span class="t" style="left:199px;top:894px;font-size:12px;color:#000;">Automotive</span>
<svg style="left:366px;top:898px;" width="8" height="5" viewBox="0 0 8 5"><path d="M0 0 H7 L3.5 4 Z" fill="#000"/></svg>
<div style="left:45px;top:911px;width:336px;height:26px;background:#fff;"></div>
<div style="left:45px;top:936px;width:336px;height:1px;background:#f0f0f0;"></div>
<div style="left:194px;top:911px;width:1px;height:26px;background:#f0f0f0;"></div>
<span class="t" style="left:62px;top:918px;font-size:12px;color:#000;">Use Expanded 2D Pro…</span>
<div style="left:281px;top:917px;width:15px;height:15px;background:#fff;border:1px solid #333;box-sizing:border-box;"></div>
<div style="left:45px;top:937px;width:336px;height:20px;background:#fff;"></div>
<div style="left:45px;top:956px;width:336px;height:1px;background:#f0f0f0;"></div>
<div style="left:194px;top:937px;width:1px;height:20px;background:#f0f0f0;"></div>
<span class="t" style="left:62px;top:941px;font-size:12px;color:#000;">Zero Speed Tolerance…</span>
<div style="left:195px;top:937px;width:185px;height:19px;background:#fff;border:1px solid #7a7a7a;box-sizing:border-box;"></div>
<span class="t" style="left:199px;top:941px;font-size:12px;color:#000;">0.0009549</span>
<svg style="left:43px;top:965px;" width="5" height="8" viewBox="0 0 5 8"><path d="M0 0 L4 4 L0 8 Z" fill="#3c3c8c"/></svg>
<span class="t" style="left:57px;top:962px;font-size:12px;color:#000;font-weight:bold;letter-spacing:0.6px;">Air Properties</span>
<svg style="left:43px;top:984px;" width="5" height="8" viewBox="0 0 5 8"><path d="M0 0 L4 4 L0 8 Z" fill="#3c3c8c"/></svg>
<span class="t" style="left:57px;top:981px;font-size:12px;color:#000;font-weight:bold;letter-spacing:0.6px;">Bearings</span>
<div style="left:381px;top:645px;width:18px;height:356px;background:#f0f0f0;"></div>
<div style="left:382px;top:646px;width:16px;height:16px;background:#fff;border:1px solid #e0e0e0;box-sizing:border-box;"></div>
<svg style="left:386px;top:651px;" width="9" height="5" viewBox="0 0 9 5"><path d="M0 4.5 L4 0.5 L8 4.5 Z" fill="#000"/></svg>
<div style="left:382px;top:663px;width:16px;height:184px;background:#cdcdcd;"></div>
<div style="left:382px;top:985px;width:16px;height:16px;background:#fff;border:1px solid #e0e0e0;box-sizing:border-box;"></div>
<svg style="left:386px;top:991px;" width="9" height="5" viewBox="0 0 9 5"><path d="M0 0.5 H8 L4 4.5 Z" fill="#000"/></svg>
<div style="left:34px;top:1001px;width:366px;height:3px;background:#f0f0f0;"></div>
<div style="left:408px;top:69px;width:61px;height:17px;background:linear-gradient(#f3f3f3,#e4e4e4);border:1px solid #acacac;box-sizing:border-box;"></div>
<span class="t" style="left:408px;width:61px;text-align:center;top:72px;">2D View</span>
<div style="left:469px;top:69px;width:61px;height:17px;background:linear-gradient(#f3f3f3,#e4e4e4);border:1px solid #acacac;box-sizing:border-box;"></div>
<span class="t" style="left:469px;width:61px;text-align:center;top:72px;">3D View</span>
<div style="left:530px;top:69px;width:59px;height:17px;background:linear-gradient(#f3f3f3,#e4e4e4);border:1px solid #acacac;box-sizing:border-box;"></div>
<span class="t" style="left:530px;width:59px;text-align:center;top:72px;">Reports</span>
<div style="left:589px;top:69px;width:51px;height:17px;background:linear-gradient(#f3f3f3,#e4e4e4);border:1px solid #acacac;box-sizing:border-box;"></div>
<span class="t" style="left:589px;width:51px;text-align:center;top:72px;">Editor</span>
<div style="left:640px;top:69px;width:86px;height:17px;background:linear-gradient(#f3f3f3,#e4e4e4);border:1px solid #acacac;box-sizing:border-box;"></div>
<span class="t" style="left:640px;width:86px;text-align:center;top:72px;">CAD Reports</span>
<div style="left:726px;top:68px;width:64px;height:18px;background:#fff;border:1px solid #acacac;box-sizing:border-box;"></div>
<div style="left:727px;top:85px;width:62px;height:2px;background:#fff;"></div>
<span class="t" style="left:726px;width:64px;text-align:center;top:71px;">Scripting</span>
<div style="left:1903px;top:72px;width:9px;height:1.5px;background:#000;"></div>
<svg style="left:1903px;top:75px;" width="10" height="6" viewBox="0 0 10 6"><path d="M0 0 H9 L4.5 4.5 Z" fill="#000"/></svg>
<span class="t" style="left:411px;top:90px;font-size:12px;color:#000;">Scripting Setup</span>
<svg style="left:1903px;top:93px;" width="10" height="5.5" viewBox="0 0 10 5.5"><path d="M0 0 H9 L4.5 4.5 Z" fill="#000"/></svg>
<div style="left:415px;top:119px;width:204px;height:70px;border:1px solid #d5dfe5;border-radius:3px;box-sizing:border-box;"></div>
<div style="left:419px;top:117px;width:119px;height:5px;background:#fff;"></div>
<span class="t" style="left:423px;top:113px;font-size:12px;color:#000;font-weight:bold;letter-spacing:0.6px;">Location Settings</span>
<span class="t" style="left:430px;top:137px;font-size:12px;color:#000;">Edit Scripting Settings</span>
<div style="left:563px;top:132px;width:38px;height:21px;background:#efefef;border:1px solid #707070;border-radius:2px;box-sizing:border-box;"></div>
<span class="t" style="left:567px;top:137px;font-size:12px;color:#000;">Edit...</span>
<span class="t" style="left:430px;top:162px;font-size:12px;color:#000;">Open SMT Store</span>
<div style="left:555px;top:155px;width:53px;height:25px;background:#add3ec;"></div>
<div style="left:559px;top:157px;width:47px;height:21px;background:#bde4fa;border:1px solid #3a74a8;box-sizing:border-box;"></div>
<span class="t" style="left:562px;top:162px;font-size:12px;color:#000;">Open...</span>
<div style="left:918px;top:119px;width:323px;height:72px;border:1px solid #d5dfe5;border-radius:3px;box-sizing:border-box;"></div>
<div style="left:922px;top:117px;width:151px;height:5px;background:#fff;"></div>
<span class="t" style="left:926px;top:113px;font-size:12px;color:#000;font-weight:bold;letter-spacing:0.6px;">Code Solution Options</span>
<span class="t" style="left:933px;top:138px;font-size:12px;color:#000;">Create Code Solution</span>
<div style="left:1090px;top:132px;width:140px;height:22px;background:#efefef;border:1px solid #707070;border-radius:2px;box-sizing:border-box;"></div>
<svg style="left:1094px;top:134px;" width="15" height="18" viewBox="0 0 15 18"><path d="M2 2 H9.5 L13.5 5.5 V16 H2 Z" fill="#fff" stroke="#000" stroke-width="1.2"/><path d="M2 1.5 V16.5 H13.5" fill="none" stroke="#000" stroke-width="2"/><path d="M9.3 2 V5.7 H13.3" fill="none" stroke="#000" stroke-width="0.8"/><path d="M7.5 6.5 V12.5 M4.5 9.5 H10.5" stroke="#000" stroke-width="1.3"/></svg>
<span class="t" style="left:1110px;top:137px;font-size:12px;color:#000;">Create Code Solution</span>
<span class="t" style="left:933px;top:164px;font-size:12px;color:#000;">Add Code Solution Property</span>
<div style="left:1148px;top:158px;width:24px;height:22px;background:#efefef;border:1px solid #707070;border-radius:2px;box-sizing:border-box;"></div>
<svg style="left:1148px;top:158px;" width="24" height="22" viewBox="0 0 24 22"><path d="M12 4.5 H5.5 V18.5 H16.5 V10" fill="none" stroke="#000" stroke-width="1.4"/><path d="M7.5 14.5 H15 M7.5 16.5 H15" stroke="#333" stroke-width="1"/><path d="M7 7.5 H10 M7 9.5 H8" stroke="#999" stroke-width="1"/><path d="M10.5 11.5 L18 4" stroke="#000" stroke-width="2.2"/><path d="M9.6 12.6 L10.2 10.6 L11.6 12 Z" fill="#000"/></svg>
<span class="t" style="left:1420px;top:113px;font-size:12px;color:#000;">Recompile Scripted Properties in MASTA</span>
<div style="left:1651px;top:107px;width:70px;height:22px;background:#efefef;border:1px solid #707070;border-radius:2px;box-sizing:border-box;"></div>
<svg style="left:1655px;top:110px;" width="16" height="16" viewBox="0 0 16 16"><path d="M12.5 4 A6 6 0 1 0 13.5 11" fill="none" stroke="#000" stroke-width="2"/><path d="M9 1 L14.5 1.5 L13.5 7 Z" fill="#000"/></svg>
<span class="t" style="left:1674px;top:112px;font-size:12px;color:#000;">Refresh</span>
<div style="left:411px;top:198px;width:75px;height:27px;background:#fdfd9f;border:1px solid #7d7d7d;border-left-color:#a5a5a5;border-top-color:#a5a5a5;box-sizing:border-box;"></div>
<svg style="left:418px;top:204px;" width="15" height="15" viewBox="0 0 15 15"><circle cx="7.5" cy="7.5" r="7.2" fill="#d42d3b"/><path d="M4.6 4.6 L10.4 10.4 M10.4 4.6 L4.6 10.4" stroke="#fff" stroke-width="2.2"/></svg>
<span class="t" style="left:434px;top:206px;font-size:12px;color:#000;">0 Errors</span>
<div style="left:490px;top:198px;width:88px;height:27px;background:#fdfd9f;border:1px solid #7d7d7d;border-left-color:#a5a5a5;border-top-color:#a5a5a5;box-sizing:border-box;"></div>
<svg style="left:497px;top:204px;" width="14" height="13" viewBox="0 0 14 13"><path d="M7.0 0.8 L13.4 12.2 H0.6 Z" fill="#f7d51d" stroke="#c9a400" stroke-width="0.8" stroke-linejoin="round"/><path d="M7.0 3.9 V8.450000000000001" stroke="#000" stroke-width="1.6"/><circle cx="7.0" cy="10.4" r="0.9" fill="#000"/></svg>
<span class="t" style="left:514px;top:206px;font-size:12px;color:#000;">1 Warning</span>
<div style="left:582px;top:198px;width:98px;height:27px;background:#fdfd9f;border:1px solid #7d7d7d;border-left-color:#a5a5a5;border-top-color:#a5a5a5;box-sizing:border-box;"></div>
<svg style="left:589px;top:204px;" width="14" height="14" viewBox="0 0 14 14"><circle cx="7.0" cy="7.0" r="6.2" fill="#fff" stroke="#1a73c8" stroke-width="1.4"/><path d="M7.0 5.88 V10.92" stroke="#1a73c8" stroke-width="1.8"/><circle cx="7.0" cy="3.64" r="1" fill="#1a73c8"/></svg>
<div style="left:409px;top:225px;width:1508px;height:137px;background:#fff;border:1px solid #828790;box-sizing:border-box;"></div>
<div style="left:410px;top:226px;width:1px;height:135px;background:#a0a0a0;"></div>
<div style="left:412px;top:227px;width:1503px;height:19px;background:linear-gradient(#ffffff,#f1f2f4);"></div>
<div style="left:412px;top:245px;width:1503px;height:2px;background:#e3e4e6;"></div>
<div style="left:437px;top:227px;width:1px;height:19px;background:#e3e4e6;"></div>
<div style="left:462px;top:227px;width:1px;height:19px;background:#e3e4e6;"></div>
<div style="left:1061px;top:227px;width:1px;height:19px;background:#e3e4e6;"></div>
<div style="left:1232px;top:227px;width:1px;height:19px;background:#e3e4e6;"></div>
<div style="left:1574px;top:227px;width:1px;height:19px;background:#e3e4e6;"></div>
<span class="t" style="left:462px;width:599px;text-align:center;top:231px;">Description</span>
<span class="t" style="left:1061px;width:171px;text-align:center;top:231px;">Category</span>
<span class="t" style="left:1232px;width:342px;text-align:center;top:231px;">Actions</span>
<span class="t" style="left:1574px;width:342px;text-align:center;top:231px;">Part</span>
<svg style="left:419px;top:296px;" width="13" height="13" viewBox="0 0 13 13"><path d="M6.5 0.8 L12.4 12.2 H0.6 Z" fill="#f7d51d" stroke="#c9a400" stroke-width="0.8" stroke-linejoin="round"/><path d="M6.5 3.9 V8.450000000000001" stroke="#000" stroke-width="1.6"/><circle cx="6.5" cy="10.4" r="0.9" fill="#000"/></svg>
<span class="t" style="left:445px;top:297px;font-size:12px;color:#000;">1</span>
<span class="t" style="left:470px;top:252px;font-size:12px;color:#1b2a84;letter-spacing:0.03px;">Scripting Warning: : Warning C:\Windows\Microsoft.NET\Framework64\v4.0.30319</span>
<span class="t" style="left:470px;top:267px;font-size:12px;color:#1b2a84;letter-spacing:0.03px;">\Microsoft.Common.targets(983,5): The reference assemblies for framework</span>
<span class="t" style="left:470px;top:282px;font-size:12px;color:#1b2a84;letter-spacing:0.03px;">".NETFramework,Version=v4.6.2" were not found. To resolve this, install the SDK or Targeting Pack for this</span>
<span class="t" style="left:470px;top:297px;font-size:12px;color:#1b2a84;letter-spacing:0.03px;">framework version or retarget your application to a version of the framework for which you have the SDK or</span>
<span class="t" style="left:470px;top:312px;font-size:12px;color:#1b2a84;letter-spacing:0.03px;">Targeting Pack installed. Note that assemblies will be resolved from the Global Assembly Cache (GAC) and</span>
<span class="t" style="left:470px;top:327px;font-size:12px;color:#1b2a84;letter-spacing:0.03px;">will be used in place of reference assemblies. Therefore your assembly may not be correctly targeted for the</span>
<span class="t" style="left:470px;top:342px;font-size:12px;color:#1b2a84;letter-spacing:0.03px;">framework you intend.</span>
<span class="t" style="left:1244px;top:297px;font-size:12px;color:#000;">No Fixes Available</span>
<span class="t" style="left:1581px;top:297px;font-size:12px;color:#1b2a84;">Code Solutions</span>
<div style="left:591px;top:184px;width:102px;height:46px;background:#fff7d4;border:2px solid #f8cf00;box-sizing:border-box;"></div>
<span class="t" style="left:599px;top:194px;font-size:12px;color:#000;letter-spacing:-0.3px;">Open SMT Store</span>
<span class="t" style="left:599px;top:208px;font-size:12px;color:#000;letter-spacing:-0.3px;">Open...</span>
<svg style="left:599px;top:166px;" width="14" height="22" viewBox="0 0 14 22"><path d="M1 1 V16 L4.5 12.5 L7.5 19.5 L10 18.5 L7 11.5 H12 Z" fill="#fff" stroke="#000" stroke-width="1" stroke-linejoin="round"/></svg>
<div style="left:408px;top:529px;width:1510px;height:8px;background:#f0f0f0;"></div>
<span class="t" style="left:411px;top:542px;font-size:12px;color:#000;">Properties</span>
<svg style="left:1903px;top:545px;" width="10" height="5.5" viewBox="0 0 10 5.5"><path d="M0 0 H9 L4.5 4.5 Z" fill="#000"/></svg>
<span class="t" style="left:414px;top:564px;font-size:12px;color:#000;">Only show Types with User Defined Properties</span>
<div style="left:892px;top:563px;width:14px;height:15px;background:#fff;border:1px solid #333;box-sizing:border-box;"></div>
<div style="left:911px;top:557px;width:3px;height:422px;background:#ececec;"></div>
<span class="t" style="left:920px;top:565px;font-size:12px;color:#000;">Add Code Solution Property</span>
<div style="left:1079px;top:559px;width:24px;height:22px;background:#efefef;border:1px solid #707070;border-radius:2px;box-sizing:border-box;"></div>
<svg style="left:1079px;top:559px;" width="24" height="22" viewBox="0 0 24 22"><path d="M12 4.5 H5.5 V18.5 H16.5 V10" fill="none" stroke="#000" stroke-width="1.4"/><path d="M7.5 14.5 H15 M7.5 16.5 H15" stroke="#333" stroke-width="1"/><path d="M7 7.5 H10 M7 9.5 H8" stroke="#999" stroke-width="1"/><path d="M10.5 11.5 L18 4" stroke="#000" stroke-width="2.2"/><path d="M9.6 12.6 L10.2 10.6 L11.6 12 Z" fill="#000"/></svg>
<div style="left:409px;top:603px;width:502px;height:376px;background:#fff;border:1px solid #a0a0a0;box-sizing:border-box;"></div>
<div style="left:409px;top:582px;width:61px;height:22px;background:#fff;border:1px solid #a0a0a0;box-sizing:border-box;"></div>
<div style="left:410px;top:602px;width:59px;height:3px;background:#fff;"></div>
<span class="t" style="left:418px;top:588px;font-size:12px;color:#000;">Reports</span>
<div style="left:414px;top:608px;width:492px;height:366px;background:#fff;border:1px solid #828790;box-sizing:border-box;"></div>
<div style="left:435px;top:610px;width:95px;height:16px;background:#a8a8a8;"></div>
<svg style="left:423px;top:615px;" width="7" height="7" viewBox="0 0 7 7"><path d="M6 0 V6 H0 Z" fill="#404040"/></svg>
<span class="t" style="left:437px;top:612px;font-size:12px;color:#000;font-weight:bold;letter-spacing:0.6px;">Root Assembly</span>
<svg style="left:444px;top:630px;" width="6" height="9" viewBox="0 0 6 9"><path d="M0.7 0.7 L4.8 4.3 L0.7 7.9 Z" fill="#fff" stroke="#a8a8a8" stroke-width="1"/></svg>
<svg style="left:460px;top:630px;" width="8" height="8" viewBox="0 0 8 8"><rect x="0.5" y="0.5" width="6" height="6" fill="#fff" stroke="#333" stroke-width="1"/><path d="M2 3.5 H5 M3.5 2 V5" stroke="#1a4fb4" stroke-width="1"/></svg>
<span class="t" style="left:471px;top:628px;font-size:12px;color:#000;">Component</span>
<svg style="left:444px;top:646px;" width="6" height="9" viewBox="0 0 6 9"><path d="M0.7 0.7 L4.8 4.3 L0.7 7.9 Z" fill="#fff" stroke="#a8a8a8" stroke-width="1"/></svg>
<span class="t" style="left:455px;top:644px;font-size:12px;color:#000;">Design</span>
<svg style="left:444px;top:662px;" width="6" height="9" viewBox="0 0 6 9"><path d="M0.7 0.7 L4.8 4.3 L0.7 7.9 Z" fill="#fff" stroke="#a8a8a8" stroke-width="1"/></svg>
<span class="t" style="left:455px;top:660px;font-size:12px;color:#000;">Mass Properties</span>
<span class="t" style="left:455px;top:676px;font-size:12px;color:#000;">Packaging Limits</span>
<svg style="left:444px;top:694px;" width="6" height="9" viewBox="0 0 6 9"><path d="M0.7 0.7 L4.8 4.3 L0.7 7.9 Z" fill="#fff" stroke="#a8a8a8" stroke-width="1"/></svg>
<svg style="left:460px;top:694px;" width="8" height="8" viewBox="0 0 8 8"><rect x="0.5" y="0.5" width="6" height="6" fill="#fff" stroke="#333" stroke-width="1"/><path d="M2 3.5 H5 M3.5 2 V5" stroke="#1a4fb4" stroke-width="1"/></svg>
<span class="t" style="left:471px;top:692px;font-size:12px;color:#000;">Specified Parallel Part Group Drawing Order</span>
<svg style="left:444px;top:710px;" width="6" height="9" viewBox="0 0 6 9"><path d="M0.7 0.7 L4.8 4.3 L0.7 7.9 Z" fill="#fff" stroke="#a8a8a8" stroke-width="1"/></svg>
<svg style="left:460px;top:710px;" width="8" height="8" viewBox="0 0 8 8"><rect x="0.5" y="0.5" width="6" height="6" fill="#fff" stroke="#333" stroke-width="1"/><path d="M2 3.5 H5 M3.5 2 V5" stroke="#1a4fb4" stroke-width="1"/></svg>
<span class="t" style="left:471px;top:708px;font-size:12px;color:#000;">Parallel Part Group</span>
<span class="t" style="left:411px;top:993px;font-size:12px;color:#000;">Status</span>
<svg style="left:1885px;top:996px;" width="10" height="5.5" viewBox="0 0 10 5.5"><path d="M0 0 H9 L4.5 4.5 Z" fill="#000"/></svg>
<svg style="left:1903px;top:994px;" width="9" height="11" viewBox="0 0 9 11"><path d="M2 0 H6 V6 H2 Z" fill="none" stroke="#000" stroke-width="1.4"/><rect x="0" y="6" width="8" height="1.6" fill="#000"/><rect x="3.3" y="7" width="1.4" height="4" fill="#000"/></svg>
<div style="left:411px;top:1008px;width:75px;height:27px;background:#fdfd9f;border:1px solid #7d7d7d;border-left-color:#a5a5a5;border-top-color:#a5a5a5;box-sizing:border-box;"></div>
<svg style="left:418px;top:1014px;" width="15" height="15" viewBox="0 0 15 15"><circle cx="7.5" cy="7.5" r="7.2" fill="#d42d3b"/><path d="M4.6 4.6 L10.4 10.4 M10.4 4.6 L4.6 10.4" stroke="#fff" stroke-width="2.2"/></svg>
<span class="t" style="left:434px;top:1016px;font-size:12px;color:#000;">0 Errors</span>
<div style="left:490px;top:1008px;width:94px;height:27px;background:#fdfd9f;border:1px solid #7d7d7d;border-left-color:#a5a5a5;border-top-color:#a5a5a5;box-sizing:border-box;"></div>
<svg style="left:497px;top:1014px;" width="14" height="13" viewBox="0 0 14 13"><path d="M7.0 0.8 L13.4 12.2 H0.6 Z" fill="#f7d51d" stroke="#c9a400" stroke-width="0.8" stroke-linejoin="round"/><path d="M7.0 3.9 V8.450000000000001" stroke="#000" stroke-width="1.6"/><circle cx="7.0" cy="10.4" r="0.9" fill="#000"/></svg>
<span class="t" style="left:513px;top:1016px;font-size:12px;color:#000;">0 Warnings</span>
<div style="left:588px;top:1008px;width:99px;height:27px;background:#fdfd9f;border:1px solid #7d7d7d;border-left-color:#a5a5a5;border-top-color:#a5a5a5;box-sizing:border-box;"></div>
<svg style="left:595px;top:1013px;" width="14" height="14" viewBox="0 0 14 14"><circle cx="7.0" cy="7.0" r="6.2" fill="#fff" stroke="#1a73c8" stroke-width="1.4"/><path d="M7.0 5.88 V10.92" stroke="#1a73c8" stroke-width="1.8"/><circle cx="7.0" cy="3.64" r="1" fill="#1a73c8"/></svg>
<span class="t" style="left:611px;top:1016px;font-size:12px;color:#000;">0 Messages</span>
</body></html>
